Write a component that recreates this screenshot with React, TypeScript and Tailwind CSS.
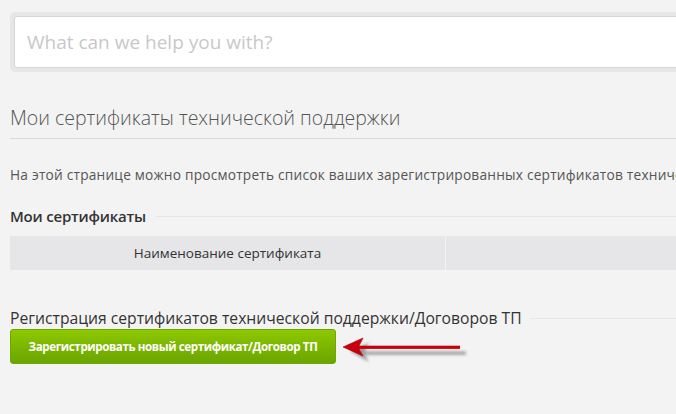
import React from "react";

export default function App() {
  const font = { fontFamily: '"Open Sans", "Noto Sans", sans-serif' };
  return (
    <div className="w-[676px] h-[414px] overflow-hidden bg-[#f3f3f3] text-[#555]" style={font}>
      <div className="pt-[12px] pl-[10px]">
        <div className="w-[720px] h-[60px] bg-[#e5e6e8] rounded-[5px] p-[4px] pr-0">
          <div className="h-[52px] bg-white border border-[#d3d6d9] rounded-[3px] flex items-center pl-[12px]">
            <span className="text-[19px] text-[#c8c8c8]">What can we help you with?</span>
          </div>
        </div>
      </div>

      <div className="pl-[10px]">
        <div className="mt-[33px] border-b border-[#d9d9d9] pb-[7px]">
          <h1 className="text-[19.5px] font-light text-[#555] leading-[26px]">
            Мои сертификаты технической поддержки
          </h1>
        </div>

        <p className="mt-[27px] text-[13.7px] leading-[18px] text-[#555] whitespace-nowrap tracking-[0.22px]">
          На этой странице можно просмотреть список ваших зарегистрированных сертификатов технической поддержки
        </p>

        <div className="mt-[21px] flex items-center gap-[10px]">
          <h2 className="text-[15px] font-semibold text-[#333] leading-[22px] whitespace-nowrap tracking-[-0.2px]">
            Мои сертификаты
          </h2>
          <div className="flex-1 h-px bg-[#e6e6e6]" />
        </div>

        <div className="mt-[9px] flex h-[34px] gap-[1px]">
          <div className="w-[435px] bg-[#e6e6e8] flex items-center justify-center text-[13.5px] text-[#333]">
            Наименование сертификата
          </div>
          <div className="flex-1 bg-[#e6e6e8]" />
        </div>

        <div className="mt-[37px] flex items-center gap-[8px]">
          <h2 className="text-[15.7px] text-[#333] leading-[22px] whitespace-nowrap">
            Регистрация сертификатов технической поддержки/Договоров ТП
          </h2>
          <div className="flex-1 h-px bg-[#e6e6e6]" />
        </div>

        <div className="mt-[0px] flex items-center">
          <button className="w-[326px] h-[35px] rounded-[3px] border border-[#6fa600] bg-gradient-to-b from-[#8ec800] to-[#6aa500] text-white text-[11.6px] font-bold tracking-[-0.4px] flex items-center justify-center">
            Зарегистрировать новый сертификат/Договор ТП
          </button>
          <svg width="130" height="30" viewBox="0 0 130 30" className="ml-[5px] mt-[4px]">
            <defs>
              <filter id="sh" x="-20%" y="-50%" width="140%" height="200%">
                <feGaussianBlur stdDeviation="1.6" />
              </filter>
            </defs>
            <g filter="url(#sh)" fill="#777" opacity="0.7">
              <polygon points="5,13 24,5 20,13 20,17 24,24" transform="translate(4,4)" />
              <rect x="19" y="13.5" width="102" height="3.2" transform="translate(4,4)" />
            </g>
            <polygon points="2,13 22,4 18,12 18,15 22,22" fill="#c8000c" />
            <rect x="17" y="11.7" width="102" height="3.2" fill="#c8000c" />
            <polygon points="2,13 22,4 18,12 18,15 22,22" fill="none" stroke="#a80008" strokeWidth="0.6" />
          </svg>
        </div>
      </div>
    </div>
  );
}
